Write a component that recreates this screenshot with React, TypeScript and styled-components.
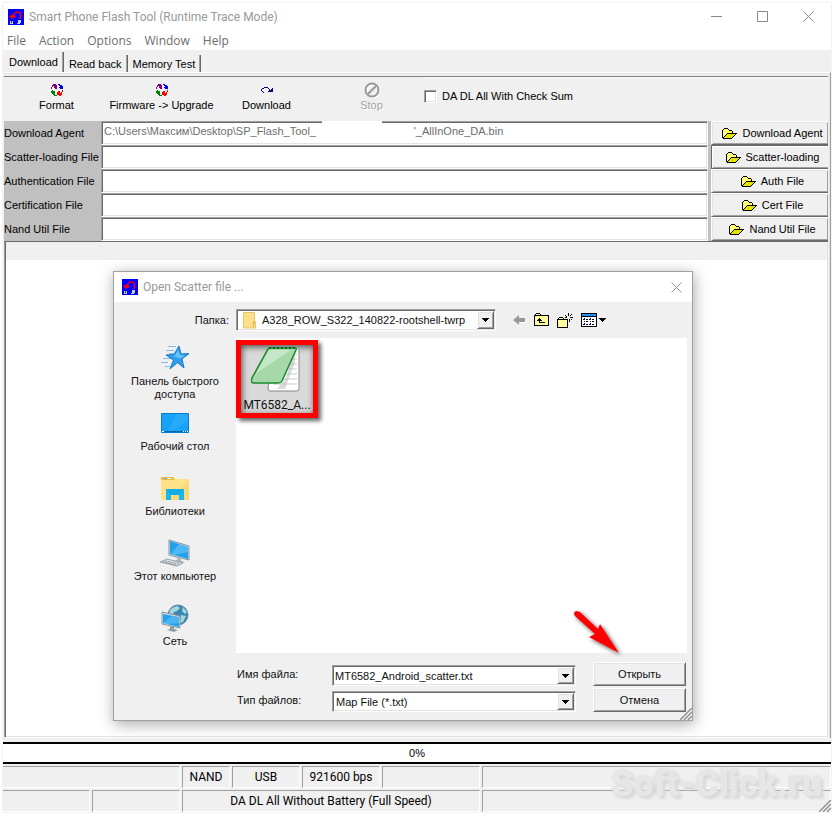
import React from "react";
import styled, { createGlobalStyle, css } from "styled-components";

const classic = `"Liberation Sans", Arial, sans-serif`;
const modern = `"Open Sans", "Noto Sans", sans-serif`;
const caption = `Roboto, "Open Sans", sans-serif`;

const sunken = css`
  border: 1px solid;
  border-color: #a0a0a0 #fff #fff #a0a0a0;
  box-shadow: inset 1px 1px 0 #696969, inset -1px -1px 0 #e3e3e3;
`;

const raised = css`
  border: 1px solid;
  border-color: #fff #696969 #696969 #fff;
  box-shadow: inset 1px 1px 0 #e3e3e3, inset -1px -1px 0 #a0a0a0;
`;

const GlobalStyle = createGlobalStyle`
  * { box-sizing: border-box; }
  body { margin: 0; background: #fff; font: 11px/14px ${classic}; color: #000; }
  button, input, select { font: inherit; color: inherit; margin: 0; padding: 0; border-radius: 0; }
  button { background: #f0f0f0; border: 0; }
  input, select { outline: 0; }
  svg { display: block; flex: none; }
`;

const Desktop = styled.div`
  min-height: 100vh;
  display: flex;
  padding: 3px 4px 4px 3px;
`;

const AppWindow = styled.main`
  position: relative;
  flex: 1;
  min-width: 0;
  display: flex;
  flex-direction: column;
  background: #fff;
  box-shadow: 0 0 2px #d8d8d8;
`;

const TitleBar = styled.header`
  display: flex;
  align-items: center;
  gap: 5px;
  height: 27px;
  padding-left: 5px;
  font: 12px/18px ${caption};
  color: #999;
`;

const Title = styled.h1`
  flex: 1;
  margin: 0;
  font: inherit;
`;

const CaptionButtons = styled.div`
  display: flex;
`;

const CaptionButton = styled.button`
  display: grid;
  place-items: center;
  width: 46px;
  height: 26px;
  background: transparent;
`;

const MenuBar = styled.nav`
  display: flex;
  gap: 13px;
  height: 20px;
  padding: 2px 4px 0;
`;

const MenuItem = styled.button`
  background: transparent;
  font: 12px/18px ${modern};
  color: #6d6d6d;
`;

const TabPanel = styled.section`
  flex: 1;
  display: flex;
  flex-direction: column;
  background: #f0f0f0;
  padding: 2px 0 4px 1px;
`;

const TabStrip = styled.div`
  display: flex;
  align-items: flex-end;
  height: 20px;
`;

const Tab = styled.button<{ $active?: boolean }>`
  height: ${(p) => (p.$active ? 20 : 17)}px;
  padding: 0 5px ${(p) => (p.$active ? 1 : 0)}px 5px;
  border-right: 1px solid #696969;
  box-shadow: inset -1px 0 0 #a0a0a0;
`;

const TabBody = styled.div`
  flex: 1;
  display: flex;
  flex-direction: column;
  padding-right: 2px;
  border-top: 1px solid #fff;
  border-right: 1px solid #a0a0a0;
  box-shadow: inset 0 1px 0 #e3e3e3, inset -1px 0 0 #e3e3e3;
`;

const Toolbar = styled.div`
  display: flex;
  height: 45px;
  margin-top: 3px;
  border-top: 1px solid #808080;
  box-shadow: inset 0 1px 0 #fff;
`;

const ToolButton = styled.button`
  display: flex;
  flex-direction: column;
  align-items: center;
  width: 105px;
  padding-top: 4px;

  &:disabled {
    color: #a0a0a0;
    text-shadow: 1px 1px 0 #fff;
  }
`;

const ToolIcon = styled.span`
  display: grid;
  place-items: center;
  height: 17px;
`;

const CheckLabel = styled.label`
  display: flex;
  align-items: center;
  gap: 5px;
  height: 38px;
  width: 160px;
`;

const CheckBox = styled.input`
  appearance: none;
  width: 13px;
  height: 13px;
  background: #fff;
  ${sunken}
`;

const Files = styled.div`
  display: flex;
  background: #c0c0c0;
`;

const FileFields = styled.div`
  flex: 1;
  min-width: 0;
`;

const FileRow = styled.div`
  display: flex;
  align-items: center;
  height: 24px;
  position: relative;
`;

const FileLabel = styled.label`
  flex: none;
  width: 97px;
  white-space: nowrap;
`;

const FileInput = styled.input`
  flex: 1;
  min-width: 0;
  height: 24px;
  padding: 0 2px 5px;
  background: #fff;
  color: #6d6d6d;
  ${sunken}
`;

const Eraser = styled.span`
  position: absolute;
  top: 0;
  left: 318px;
  width: 60px;
  height: 2px;
  background: #fff;
`;

const FileButtons = styled.div`
  display: flex;
  flex-direction: column;
  width: 117px;
  margin-left: 3px;
`;

const FileButton = styled.button<{ $default?: boolean }>`
  flex: 1;
  display: flex;
  align-items: center;
  justify-content: center;
  gap: 5px;
  padding-left: 5px;
  ${raised}
  border-right: 0;
  ${(p) => p.$default && `border-color: #696969; box-shadow: inset 1px 1px 0 #fff, inset 0 -1px 0 #a0a0a0, 0 1px 0 #696969;`}
`;

const LogFrame = styled.div`
  flex: 1;
  display: flex;
  flex-direction: column;
  padding: 1px 0 0 1px;
  border-top: 1px solid #696969;
  border-left: 1px solid #a0a0a0;
  border-bottom: 1px solid #fff;
  box-shadow: inset 1px 0 0 #696969;
`;

const Log = styled.div`
  flex: 1;
  background: #fff;
  border: 1px solid #e3e3e3;
  border-width: 0 1px 1px 0;
`;

const LogHeader = styled.div`
  height: 17px;
  background: #f0f0f0;
`;

const Progress = styled.div`
  height: 22px;
  border: solid #000;
  border-width: 2px 0;
  background: #fff;
  line-height: 19px;
  text-align: center;
`;

const StatusBar = styled.footer`
  display: flex;
  flex-direction: column;
  gap: 2px;
  padding-top: 2px;
  background: #f0f0f0;
  font: 12px/20px ${caption};
`;

const StatusRow = styled.div<{ $columns: string }>`
  display: grid;
  grid-template-columns: ${(p) => p.$columns};
  gap: 2px;
  height: 22px;
`;

const StatusCell = styled.div`
  text-align: center;
  white-space: nowrap;
  border: 1px solid;
  border-color: #a0a0a0 #fff #fff #a0a0a0;

  &:first-child {
    border-left: 0;
  }
`;

const Watermark = styled.div`
  position: absolute;
  right: 9px;
  bottom: 8px;
  font: 900 36px/40px Roboto, sans-serif;
  color: #e6e6e6;
  text-shadow: 0 0 3px #d6d6d6, 3px 3px 3px #d9d9d9;
`;

const CornerGrip = styled.div`
  position: absolute;
  right: 0;
  bottom: 0;
`;

const Dialog = styled.div`
  position: absolute;
  left: 110px;
  top: 268px;
  width: 580px;
  background: #f0f0f0;
  border: 1px solid #a0a0a0;
  box-shadow: 1px 3px 14px rgba(0, 0, 0, 0.35);
  color: #111;
`;

const DialogTitle = styled.div`
  display: flex;
  align-items: center;
  gap: 5px;
  height: 30px;
  padding-left: 8px;
  background: #fff;
  font: 12px/18px ${caption};
  color: #999;
`;

const DialogHeading = styled.h2`
  flex: 1;
  margin: 0;
  font: inherit;
`;

const DialogClose = styled(CaptionButton)`
  width: 31px;
`;

const FolderBar = styled.div`
  display: flex;
  align-items: center;
  padding: 7px 5px 6px 0;
`;

const FolderLabel = styled.label`
  width: 122px;
  padding-right: 7px;
  text-align: right;
`;

const Combo = styled.div`
  position: relative;
  display: flex;
  height: 21px;
  padding: 1px;
  background: #fff;
  ${sunken}
`;

const FolderCombo = styled(Combo)`
  width: 260px;
  height: 22px;
`;

const ComboSelect = styled.select<{ $indent?: boolean }>`
  appearance: none;
  flex: 1;
  min-width: 0;
  padding-left: ${(p) => (p.$indent ? 24 : 2)}px;
  border: 0;
  background: transparent;
`;

const ComboInput = styled.input`
  flex: 1;
  min-width: 0;
  padding-left: 1px;
  border: 0;
  background: transparent;
`;

const DropButton = styled.span`
  display: grid;
  place-items: center;
  width: 17px;
  background: #f0f0f0;
  pointer-events: none;
  ${raised}
`;

const FolderBadge = styled.span`
  position: absolute;
  left: 6px;
  top: 2px;
`;

const IconButton = styled.button`
  display: grid;
  place-items: center;
  height: 20px;
`;

const IconBar = styled.div`
  display: flex;
  gap: 8px;
  margin-left: 17px;
`;

const DialogBody = styled.div`
  display: grid;
  grid-template-columns: 122px 1fr;
  padding: 1px 5px 8px 0;
`;

const Places = styled.nav`
  display: flex;
  flex-direction: column;
  padding-top: 5px;
`;

const Place = styled.button`
  display: flex;
  flex-direction: column;
  align-items: center;
  height: 65px;
  gap: 2px;
  line-height: 13px;
`;

const PlaceIcon = styled.span`
  display: grid;
  place-items: center;
  width: 32px;
  height: 30px;
`;

const PlaceText = styled.span`
  width: 100px;
`;

const RightPane = styled.div`
  display: flex;
  flex-direction: column;
`;

const FileList = styled.div`
  height: 315px;
  background: #fff;
`;

const FileTile = styled.button`
  display: flex;
  flex-direction: column;
  align-items: center;
  justify-content: space-between;
  width: 82px;
  height: 78px;
  margin-top: 2px;
  padding: 1px 0 0;
  border: 5px solid #f00;
  background: #d9d9d9;
  box-shadow: 3px 3px 4px rgba(0, 0, 0, 0.6), inset 1px 2px 6px rgba(0, 0, 0, 0.65);
  font: 12px/15px ${caption};
`;

const Form = styled.div`
  display: grid;
  grid-template-columns: 96px 244px 93px;
  row-gap: 2px;
  padding-top: 9px;
`;

const FormLabel = styled.label`
  padding: 5px 0 0 1px;
`;

const FormCombo = styled(Combo)`
  margin-top: 3px;
`;

const PushButton = styled.button`
  width: 93px;
  height: 24px;
  margin-left: 17px;
  ${raised}
`;

const Pointer = styled.div`
  position: absolute;
  left: 456px;
  top: 335px;
  pointer-events: none;
`;

const AppIcon = () => (
  <svg width="16" height="16" viewBox="0 0 16 16" aria-hidden="true">
    <path fill="#00f" d="M0 0h16v16H0z" />
    <path fill="none" stroke="#f00" strokeWidth="1.500" d="M5 8c0-3 2-5 4.500-5S13 5 12.500 7.500L12 10" />
    <path fill="#f00" d="M1 7l4-1.500 3 2L4 10z" />
    <path fill="#c5d2c5" d="M2 12h3v3H2zM10 11h3v3h-1v1H9v-1h1z" />
    <path fill="#050" d="M3 12h1v2H3z" />
  </svg>
);

const CycleIcon = () => (
  <svg width="12" height="12" viewBox="0 0 12 12" shapeRendering="crispEdges" aria-hidden="true">
    <path fill="#800080" d="M2 0h3v1H2zM1 1h5v1H1zM1 2h1v1H1zM3 2h3v1H3zM0 3h1v2H0zM3 3h3v1H3zM4 4h2v1H4z" />
    <path fill="#00f" d="M7 0h2v1H7zM8 1h2v1H8zM9 2h3v1H9zM8 3h4v1H8zM9 4h3v1H9zM10 1h1v1h-1z" />
    <path fill="#008000" d="M1 6h1v1H1zM0 7h4v1H0zM0 8h4v1H0zM1 9h3v1H1zM2 10h2v1H2zM3 11h3v1H3z" />
    <path fill="#f00" d="M11 6h1v2h-1zM7 7h2v1H7zM6 8h3v1H6zM10 8h1v2h-1zM6 9h4v1H6zM6 10h5v1H6zM8 11h2v1H8z" />
  </svg>
);

const RedoIcon = () => (
  <svg width="12" height="6" viewBox="0 0 12 6" shapeRendering="crispEdges" aria-hidden="true">
    <path fill="#000080" d="M3 0h4v1H3zM1 1h2v1H1zM7 1h1v1H7zM11 1h1v1h-1zM0 2h1v2H0zM8 2h1v1H8zM10 2h2v1h-2zM8 3h4v1H8zM1 4h1v1H1zM7 4h5v1H7zM2 5h1v1H2z" />
  </svg>
);

const StopIcon = () => (
  <svg width="16" height="16" viewBox="0 0 16 16" aria-hidden="true">
    <g fill="none" strokeWidth="2">
      <circle cx="9" cy="9" r="6" stroke="#fff" />
      <circle cx="8" cy="8" r="6.500" stroke="#999" />
      <path stroke="#999" d="M4 12 12 4" />
    </g>
  </svg>
);

const OpenFolderIcon = () => (
  <svg width="15" height="11" viewBox="0 0 15 11" shapeRendering="crispEdges" aria-hidden="true">
    <path fill="#ffff70" d="M1 2h1V1h4v1h5v3H5v2H3v3H1z" />
    <path fill="#e3e300" d="M5 6h9v1h-1v1h-1v1h-1v1H2V9h1V8h1V7h1z" />
    <path d="M2 0h4v1H2zM1 1h1v1H1zM6 1h1v1H6zM0 2h1v8H0zM7 2h3v1H7zM10 3h1v2h-1zM5 5h10v1H5zM4 6h1v1H4zM3 7h1v1H3zM2 8h1v1H2zM1 9h1v1H1zM13 6h1v1h-1zM12 7h1v1h-1zM11 8h1v1h-1zM1 10h9V9h1v1h-1v1H1z" />
  </svg>
);

const Arrow = () => (
  <svg width="7" height="4" viewBox="0 0 7 4" shapeRendering="crispEdges" aria-hidden="true">
    <path d="M0 0h7v1H6v1H5v1H4v1H3V3H2V2H1V1H0z" />
  </svg>
);

const Cross = ({ color }: { color: string }) => (
  <svg width="11" height="11" viewBox="0 0 11 11" aria-hidden="true">
    <path stroke={color} d="m.5.5 10 10m0-10-10 10" />
  </svg>
);

const Grip = () => (
  <svg width="12" height="12" viewBox="0 0 12 12" aria-hidden="true">
    <path stroke="#fff" d="M1 12 12 1M5 12l7-7M9 12l3-3" />
    <path stroke="#909090" strokeWidth="1.500" d="M0 12 12 0M4 12l8-8M8 12l4-4" />
  </svg>
);

const StarIcon = () => (
  <svg width="30" height="26" viewBox="0 0 30 26" aria-hidden="true">
    <path stroke="#56aee4" d="M8 1.500h8M6 5.500h8M9 8.500h5M3 13.500h8M1 17.500h7M5 21.500h5" opacity=".75" />
    <path fill="#2f9fec" stroke="#1479c6" d="m19 1 2 8 8-.5-7 5.500 2 9-6.500-5.500L10 24l3.500-9L6 10l8-.5z" />
    <path fill="#67c2fa" d="m18 5 2 5 5 .5-5 3-8-3h3z" />
  </svg>
);

const DesktopIcon = () => (
  <svg width="28" height="20" viewBox="0 0 28 20" aria-hidden="true">
    <path fill="#18a2fa" stroke="#087bd0" d="M.5.5h27v19H.5z" />
    <path fill="#43b4fc" d="M15 1h12v7L11 18H7z" opacity=".4" />
    <path fill="#0069ad" d="M1 18h26v1H1z" />
    <path stroke="#fff" d="M1 18.500h2M22 18.500h1M24 18.500h1M26 18.500h1" />
  </svg>
);

const LibraryIcon = () => (
  <svg width="28" height="25" viewBox="0 0 28 25" aria-hidden="true">
    <path fill="#edba3d" d="M0 1h12l2 2h14v4H0z" />
    <path fill="#ffe28a" d="M0 4h12l2-1h14v21H0z" />
    <path fill="#fff" d="M3 2h7v1H3z" />
    <path fill="#43b7e7" d="M3 2h3v1H3z" />
    <path fill="#f9d36c" d="m28 3-20 21h20z" opacity=".7" />
    <path fill="#18b8ee" d="M5 13h18v11h-5v-5h-8v5H5z" />
    <path fill="#0a93cc" d="M5 13h18l-5 6h-8z" opacity=".35" />
  </svg>
);

const ComputerIcon = () => (
  <svg width="32" height="28" viewBox="0 0 32 28" aria-hidden="true">
    <path fill="#d8e4e9" stroke="#81949e" d="m10 1 20 6v14l-20-5z" />
    <path fill="#249fec" d="m11 2 18 6v12l-18-5z" />
    <path fill="#65c3f8" d="m20 5 9 3v5l-13 3-4-1z" opacity=".65" />
    <path fill="#a9b3b8" d="m18 19 4 1v2l4 1-5 2-6-3 3-1z" />
    <path fill="#dbe0e3" stroke="#98a3a9" d="m8 20 16 4-6 3-17-4z" />
    <path stroke="#88939a" strokeDasharray="2 1" d="m6 22 14 3M4 23l13 3" />
  </svg>
);

const NetworkIcon = () => (
  <svg width="30" height="29" viewBox="0 0 30 29" aria-hidden="true">
    <circle cx="18" cy="11" r="10" fill="#3988b3" stroke="#5e8da6" />
    <path fill="#a8d5dc" d="m12 4 5-2 3 2-3 3-3 1-2 4-3-2 1-4zm11-1 4 5-2 2-3-3zm-2 8 5 1-3 6-3 1z" />
    <path fill="#d8e4e9" stroke="#81949e" d="m2 8 18 4v12L2 20z" />
    <path fill="#249fec" d="m3 10 16 3v10L3 19z" />
    <path fill="#65c3f8" d="m12 12 7 1v6l-12 1-4-1z" opacity=".6" />
    <path fill="#909ca3" d="m10 22 4 1v2l4 1-4 2-7-2 3-1z" />
  </svg>
);

const NotepadIcon = () => (
  <svg width="52" height="48" viewBox="0 0 52 48" aria-hidden="true">
    <path fill="#fff" stroke="#888" d="M22 1.500h23q3 0 3 3V43q0 2-3 2H19q-2 0-2-3z" />
    <path stroke="#c4cccc" d="M33 8h13M32 13h14M30 18h16M28 23h18M26 28h20M24 33h22M22 38h24" />
    <path fill="#bbb" d="m44 4-9 28-9 11h8l10-27z" opacity=".55" />
    <path fill="#a6d8a8" stroke="#168a2c" strokeWidth="1.500" d="M17 3q1-1 3-1h24q2 0 1 2L31 35q-1 2-4 2H3q-4 0-2-5z" />
    <path fill="#d7efd7" d="M18 4h22L7 26 3 31z" opacity=".65" />
    <path stroke="#0a6320" strokeWidth="2" strokeDasharray="2 2" d="M18 2h27" />
  </svg>
);

const SmallFolder = () => (
  <svg width="14" height="17" viewBox="0 0 14 17" aria-hidden="true">
    <path fill="#ffe08a" stroke="#e8c462" d="M.5.5h11V10h1v6H.5z" />
    <path fill="none" stroke="#dcb64d" d="M10.500 15v-5h2" />
  </svg>
);

const BackIcon = () => (
  <svg width="13" height="11" viewBox="0 0 13 11" aria-hidden="true">
    <path fill="#fff" d="m1 6 5 5V8h7V5z" />
    <path fill="#999" d="m0 5 6-5v3h6v4H6v3z" />
  </svg>
);

const UpIcon = () => (
  <svg width="15" height="14" viewBox="0 0 15 14" shapeRendering="crispEdges" aria-hidden="true">
    <path fill="#ffffa0" d="M1 3h13v9H1zM2 1h4v2H2z" />
    <path d="M2 0h4v1H2zM1 1h1v1H1zM6 1h1v1H6zM0 2h15v1H0zM0 3h1v10H0zM14 3h1v10h-1zM0 12h15v1H0zM5 5h1v1H5zM4 6h3v1H4zM3 7h5v1H3zM5 8h1v2H5zM5 9h6v1H5z" />
  </svg>
);

const NewFolderIcon = () => (
  <svg width="16" height="15" viewBox="0 0 16 15" shapeRendering="crispEdges" aria-hidden="true">
    <path fill="#ffffa0" d="M1 7h10v7H1zM2 5h4v2H2z" />
    <path d="M2 4h4v1H2zM1 5h1v1H1zM6 5h1v1H6zM0 6h11v1H0zM0 7h1v8H0zM10 7h1v8h-1zM0 14h11v1H0zM11 0h1v3h-1zM8 2h1v1H8zM9 3h1v1H9zM14 1h1v1h-1zM13 2h1v1h-1zM13 4h3v1h-3zM12 6h1v3h-1zM14 6h1v1h-1zM8 4h2v1H8z" />
  </svg>
);

const ViewIcon = () => (
  <svg width="26" height="14" viewBox="0 0 26 14" shapeRendering="crispEdges" aria-hidden="true">
    <path d="M0 0h16v14H0z" />
    <path fill="#fff" d="M1 4h14v9H1z" />
    <path fill="#1e90ff" d="M1 1h14v2H1z" />
    <path fill="#000080" d="M3 5h1v2H3zM9 5h1v2H9zM3 8h1v1H3zM9 8h1v1H9zM3 10h1v2H3zM9 10h1v2H9zM2 6h1v1H2zM8 6h1v1H8zM2 11h1v1H2zM8 11h1v1H8z" />
    <path d="M5 6h2v1H5zM11 6h2v1h-2zM5 8h2v1H5zM11 8h2v1h-2zM5 11h2v1H5zM11 11h2v1h-2zM18 5h7v1h-1v1h-1v1h-1v1h-1V8h-1V7h-1V6h-1z" />
  </svg>
);

const RedArrow = () => (
  <svg width="60" height="56" viewBox="0 0 60 56" aria-hidden="true">
    <defs>
      <filter id="arrowShadow" x="-20%" y="-20%" width="150%" height="150%">
        <feDropShadow dx="2" dy="2" stdDeviation="2" floodOpacity=".65" />
      </filter>
    </defs>
    <path fill="#f00" filter="url(#arrowShadow)" d="M4 7q0-3 3-3l3 1 18 17 2-5 19 29-30-16 6-3L5 9z" />
  </svg>
);

const erased = "\u00a0".repeat(32);
const fileRows = [
  { id: "agent", label: "Download Agent", button: "Download Agent", value: `C:\\Users\\Максим\\Desktop\\SP_Flash_Tool_${erased}'_AllInOne_DA.bin` },
  { id: "scatter", label: "Scatter-loading File", button: "Scatter-loading", value: "" },
  { id: "auth", label: "Authentication File", button: "Auth File", value: "" },
  { id: "cert", label: "Certification File", button: "Cert File", value: "" },
  { id: "nand", label: "Nand Util File", button: "Nand Util File", value: "" },
];

const places = [
  { text: "Панель быстрого доступа", icon: <StarIcon /> },
  { text: "Рабочий стол", icon: <DesktopIcon /> },
  { text: "Библиотеки", icon: <LibraryIcon /> },
  { text: "Этот компьютер", icon: <ComputerIcon /> },
  { text: "Сеть", icon: <NetworkIcon /> },
];

function OpenDialog() {
  return (
    <Dialog role="dialog" aria-labelledby="dialog-title">
      <DialogTitle>
        <AppIcon />
        <DialogHeading id="dialog-title">Open Scatter file ...</DialogHeading>
        <DialogClose aria-label="Close dialog"><Cross color="#999" /></DialogClose>
      </DialogTitle>
      <FolderBar>
        <FolderLabel htmlFor="folder">Папка:</FolderLabel>
        <FolderCombo>
          <FolderBadge><SmallFolder /></FolderBadge>
          <ComboSelect id="folder" $indent><option>A328_ROW_S322_140822-rootshell-twrp</option></ComboSelect>
          <DropButton><Arrow /></DropButton>
        </FolderCombo>
        <IconBar>
          <IconButton aria-label="Back"><BackIcon /></IconButton>
          <IconButton aria-label="Up one level"><UpIcon /></IconButton>
          <IconButton aria-label="New folder"><NewFolderIcon /></IconButton>
          <IconButton aria-label="View"><ViewIcon /></IconButton>
        </IconBar>
      </FolderBar>
      <DialogBody>
        <Places>
          {places.map((p) => (
            <Place key={p.text}>
              <PlaceIcon>{p.icon}</PlaceIcon>
              <PlaceText>{p.text}</PlaceText>
            </Place>
          ))}
        </Places>
        <RightPane>
          <FileList>
            <FileTile><NotepadIcon />MT6582_A...</FileTile>
          </FileList>
          <Form>
            <FormLabel htmlFor="file-name">Имя файла:</FormLabel>
            <FormCombo>
              <ComboInput id="file-name" defaultValue="MT6582_Android_scatter.txt" />
              <DropButton><Arrow /></DropButton>
            </FormCombo>
            <PushButton>Открыть</PushButton>
            <FormLabel htmlFor="file-type">Тип файлов:</FormLabel>
            <FormCombo>
              <ComboSelect id="file-type"><option>Map File (*.txt)</option></ComboSelect>
              <DropButton><Arrow /></DropButton>
            </FormCombo>
            <PushButton>Отмена</PushButton>
          </Form>
        </RightPane>
      </DialogBody>
      <Pointer><RedArrow /></Pointer>
      <CornerGrip><Grip /></CornerGrip>
    </Dialog>
  );
}

export default function App() {
  return (
    <>
      <GlobalStyle />
      <Desktop>
        <AppWindow>
          <TitleBar>
            <AppIcon />
            <Title>Smart Phone Flash Tool (Runtime Trace Mode)</Title>
            <CaptionButtons>
              <CaptionButton aria-label="Minimize">
                <svg width="11" height="11" viewBox="0 0 11 11"><path stroke="#888" d="M0 5.500h11" /></svg>
              </CaptionButton>
              <CaptionButton aria-label="Maximize">
                <svg width="11" height="11" viewBox="0 0 11 11"><path fill="none" stroke="#888" d="M.5.500h10v10H.5z" /></svg>
              </CaptionButton>
              <CaptionButton aria-label="Close"><Cross color="#888" /></CaptionButton>
            </CaptionButtons>
          </TitleBar>
          <MenuBar>
            {["File", "Action", "Options", "Window", "Help"].map((m) => <MenuItem key={m}>{m}</MenuItem>)}
          </MenuBar>
          <TabPanel>
            <TabStrip role="tablist">
              <Tab role="tab" aria-selected="true" $active>Download</Tab>
              <Tab role="tab" aria-selected="false">Read back</Tab>
              <Tab role="tab" aria-selected="false">Memory Test</Tab>
            </TabStrip>
            <TabBody>
              <Toolbar>
                <ToolButton><ToolIcon><CycleIcon /></ToolIcon>Format</ToolButton>
                <ToolButton><ToolIcon><CycleIcon /></ToolIcon>Firmware -&gt; Upgrade</ToolButton>
                <ToolButton><ToolIcon><RedoIcon /></ToolIcon>Download</ToolButton>
                <ToolButton disabled><ToolIcon><StopIcon /></ToolIcon>Stop</ToolButton>
                <CheckLabel><CheckBox type="checkbox" />DA DL All With Check Sum</CheckLabel>
              </Toolbar>
              <Files>
                <FileFields>
                  {fileRows.map((r) => (
                    <FileRow key={r.id}>
                      <FileLabel htmlFor={r.id}>{r.label}</FileLabel>
                      <FileInput id={r.id} readOnly value={r.value} />
                      {r.id === "agent" && <Eraser />}
                    </FileRow>
                  ))}
                </FileFields>
                <FileButtons>
                  {fileRows.map((r) => (
                    <FileButton key={r.id} $default={r.id === "scatter"}><OpenFolderIcon />{r.button}</FileButton>
                  ))}
                </FileButtons>
              </Files>
              <LogFrame><Log><LogHeader /></Log></LogFrame>
            </TabBody>
          </TabPanel>
          <Progress>0%</Progress>
          <StatusBar>
            <StatusRow $columns="177px 48px 68px 78px 98px 1fr">
              <StatusCell />
              <StatusCell>NAND</StatusCell>
              <StatusCell>USB</StatusCell>
              <StatusCell>921600 bps</StatusCell>
              <StatusCell />
              <StatusCell />
            </StatusRow>
            <StatusRow $columns="87px 88px 298px 1fr">
              <StatusCell />
              <StatusCell />
              <StatusCell>DA DL All Without Battery (Full Speed)</StatusCell>
              <StatusCell />
            </StatusRow>
          </StatusBar>
          <Watermark>Soft-Click.ru</Watermark>
          <CornerGrip><Grip /></CornerGrip>
          <OpenDialog />
        </AppWindow>
      </Desktop>
    </>
  );
}
